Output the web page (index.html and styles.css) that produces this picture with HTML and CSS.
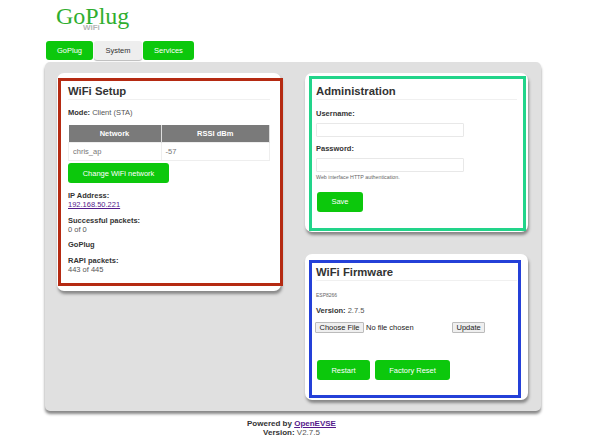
FILE: index.html
```html
<!DOCTYPE html>
<html lang="en">
<head>
  <meta charset="UTF-8" />
  <title>GoPlug</title>
  <link rel="stylesheet" href="styles.css">
</head>
<body>
  <div class="page">
    <div class="logo">
      <div class="logo-name">GoPlug</div>
      <div class="logo-sub">WiFi</div>
    </div>

    <div class="tabs">
      <div class="tab">GoPlug</div>
      <div class="tab active">System</div>
      <div class="tab">Services</div>
    </div>

    <div class="container">
      <div class="column">
        <div class="card card-setup">
          <div class="mark mark-red"></div>
          <h2>WiFi Setup</h2>
          <p class="mode"><b>Mode:</b> Client (STA)</p>
          <table>
            <tr><th>Network</th><th>RSSI dBm</th></tr>
            <tr><td>chris_ap</td><td>-57</td></tr>
          </table>
          <button class="btn btn-wide">Change WiFi network</button>
          <p class="info"><b>IP Address:</b><br><a href="#">192.168.50.221</a></p>
          <p class="info"><b>Successful packets:</b><br>0 of 0</p>
          <p class="info"><b>GoPlug</b></p>
          <p class="info"><b>RAPI packets:</b><br>443 of 445</p>
        </div>
      </div>

      <div class="column">
        <div class="card card-admin">
          <div class="mark mark-green"></div>
          <h2>Administration</h2>
          <label>Username:</label>
          <input type="text">
          <label>Password:</label>
          <input type="password">
          <div class="tiny">Web interface HTTP authentication.</div>
          <button class="btn btn-save">Save</button>
        </div>

        <div class="card card-firmware">
          <div class="mark mark-blue"></div>
          <h2>WiFi Firmware</h2>
          <div class="tiny chip">ESP8266</div>
          <p class="version"><b>Version:</b> 2.7.5</p>
          <div class="upload">
            <span class="file-btn">Choose File</span>
            <span class="file-name">No file chosen</span>
            <span class="file-btn">Update</span>
          </div>
          <div class="actions">
            <button class="btn btn-restart">Restart</button>
            <button class="btn btn-reset">Factory Reset</button>
          </div>
        </div>
      </div>
    </div>

    <div class="footer">
      <b>Powered by <a href="#">OpenEVSE</a></b><br>
      <b>Version:</b> V2.7.5
    </div>
  </div>
</body>
</html>
```

FILE: styles.css
```css
body {
  margin: 0;
  background: white;
  font-family: "Liberation Sans", Arial, sans-serif;
  font-size: 7.5px;
  color: #555;
}

.page {
  width: 496px;
  margin-left: 45px;
  padding-top: 1px;
}

.logo {
  margin-left: 11px;
  height: 40px;
}

.logo-name {
  font-family: "Liberation Serif", serif;
  font-size: 24px;
  line-height: 30px;
  color: #2fae2f;
}

.logo-sub {
  margin-top: -8px;
  margin-left: 27px;
  font-size: 8px;
  line-height: 9px;
  font-weight: bold;
  color: #b5b5b5;
}

.tabs {
  display: flex;
  gap: 1px;
  padding-left: 1px;
}

.tab {
  height: 19px;
  line-height: 19px;
  padding: 0 11px;
  border-radius: 3px;
  background: #0cc80c;
  color: white;
  text-align: center;
}

.tab.active {
  padding: 0 11.5px;
  background: #eeeeee;
  color: #333;
  box-shadow: 0 1px 1px #bbb;
}

.container {
  display: grid;
  grid-template-columns: 224px 223px;
  column-gap: 24px;
  align-items: start;
  height: 349px;
  margin-top: 2px;
  padding: 11px 13px 0 12px;
  box-sizing: border-box;
  background: #e0e0e0;
  border-radius: 5px;
  box-shadow: 0 3px 3px #888;
}

.column {
  display: flex;
  flex-direction: column;
  gap: 22px;
}

.card {
  position: relative;
  box-sizing: border-box;
  padding: 11px 11px 0 11px;
  background: white;
  border-radius: 7px;
  box-shadow: 1px 3px 3px #888;
}

.card-setup { height: 218px; }
.card-admin { height: 159px; }
.card-firmware { height: 146px; }

/* coloured frames drawn on top of the cards */
.mark {
  position: absolute;
  box-sizing: border-box;
  border-style: solid;
  border-width: 3px;
  pointer-events: none;
}

.mark-red {
  left: 1px;
  top: 5px;
  width: 225px;
  height: 208px;
  border-color: #b52a12;
}

.mark-green {
  left: 4px;
  top: 3px;
  width: 217px;
  height: 155px;
  border-color: #22d48a;
}

.mark-blue {
  left: 4px;
  top: 6px;
  width: 212px;
  height: 138px;
  border-color: #2440d8;
}

h2 {
  margin: 0 0 8px 0;
  padding-bottom: 1px;
  border-bottom: 1px solid #f0f0f0;
  font-size: 11.3px;
  line-height: 14px;
  color: #333;
}

b, label {
  color: #333;
  font-weight: bold;
}

p {
  margin: 0;
}

.mode {
  line-height: 9px;
  margin-bottom: 8px;
}

table {
  width: 202px;
  border-collapse: collapse;
  margin-bottom: 2px;
}

th {
  height: 17px;
  padding: 0;
  background: #7a7a7a;
  color: white;
  border-right: 1px solid #ddd;
}

th:first-child { width: 92px; }

td {
  height: 17px;
  padding: 0 4px;
  border: 1px solid #eee;
  color: #777;
}

.btn {
  display: block;
  height: 20px;
  padding: 0;
  border: none;
  border-radius: 3px;
  background: #0cc80c;
  color: white;
  font-family: inherit;
  font-size: 7.5px;
}

.btn-wide {
  width: 101px;
  margin-bottom: 8px;
}

.info {
  margin-bottom: 6.5px;
  line-height: 9px;
}

label {
  display: block;
  margin-bottom: 3.5px;
  line-height: 11px;
}

input {
  display: block;
  width: 148px;
  height: 14px;
  box-sizing: border-box;
  margin-bottom: 6.5px;
  border: 1px solid #e8e8e8;
  border-radius: 1px;
  background: white;
}

.tiny {
  font-size: 5.3px;
  line-height: 7px;
  color: #666;
}

input + .tiny {
  margin-top: -4px;
}

.btn-save {
  width: 46px;
  margin-top: 10.5px;
  margin-left: 1px;
}

.chip {
  padding-top: 2.5px;
  font-size: 5px;
}

.version {
  margin-top: 7px;
  line-height: 9px;
}

.upload {
  display: flex;
  align-items: center;
  margin-top: 7.5px;
  margin-left: -1px;
  color: #222;
}

.file-btn {
  height: 9px;
  line-height: 9px;
  padding: 0 3.5px;
  border: 1px solid #bbb;
  border-radius: 1px;
  background: #efefef;
  color: #222;
}

.file-name {
  width: 86px;
  margin-left: 2px;
}

.actions {
  display: flex;
  gap: 5px;
  margin-top: 27px;
  margin-left: 1px;
}

.btn-restart { width: 53px; }
.btn-reset { width: 75px; }

.footer {
  margin-top: 8px;
  padding-right: 3px;
  text-align: center;
  font-size: 8px;
  line-height: 9px;
  color: #555;
}

a {
  color: #551a8b;
}
```
